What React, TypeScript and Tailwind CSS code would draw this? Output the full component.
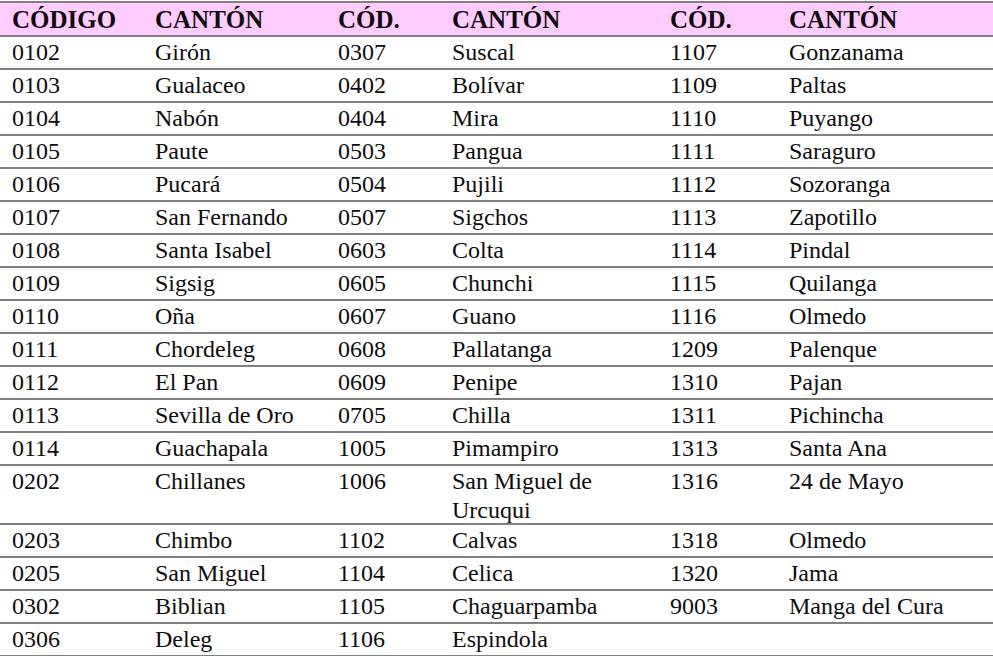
const rows: string[][] = [
  ['0102', 'Girón', '0307', 'Suscal', '1107', 'Gonzanama'],
  ['0103', 'Gualaceo', '0402', 'Bolívar', '1109', 'Paltas'],
  ['0104', 'Nabón', '0404', 'Mira', '1110', 'Puyango'],
  ['0105', 'Paute', '0503', 'Pangua', '1111', 'Saraguro'],
  ['0106', 'Pucará', '0504', 'Pujili', '1112', 'Sozoranga'],
  ['0107', 'San Fernando', '0507', 'Sigchos', '1113', 'Zapotillo'],
  ['0108', 'Santa Isabel', '0603', 'Colta', '1114', 'Pindal'],
  ['0109', 'Sigsig', '0605', 'Chunchi', '1115', 'Quilanga'],
  ['0110', 'Oña', '0607', 'Guano', '1116', 'Olmedo'],
  ['0111', 'Chordeleg', '0608', 'Pallatanga', '1209', 'Palenque'],
  ['0112', 'El Pan', '0609', 'Penipe', '1310', 'Pajan'],
  ['0113', 'Sevilla de Oro', '0705', 'Chilla', '1311', 'Pichincha'],
  ['0114', 'Guachapala', '1005', 'Pimampiro', '1313', 'Santa Ana'],
  ['0202', 'Chillanes', '1006', 'San Miguel de\nUrcuqui', '1316', '24 de Mayo'],
  ['0203', 'Chimbo', '1102', 'Calvas', '1318', 'Olmedo'],
  ['0205', 'San Miguel', '1104', 'Celica', '1320', 'Jama'],
  ['0302', 'Biblian', '1105', 'Chaguarpamba', '9003', 'Manga del Cura'],
  ['0306', 'Deleg', '1106', 'Espindola', '', ''],
]

const headers = ['CÓDIGO', 'CANTÓN', 'CÓD.', 'CANTÓN', 'CÓD.', 'CANTÓN']

// fixed column widths so the text starts where the original table has it
const cols = 'grid grid-cols-[143px_183px_114px_218px_119px_1fr]'

export default function App() {
  return (
    <div className="w-[993px] h-[656px] overflow-hidden bg-white text-[#0d0d0d] font-['Liberation_Serif','DejaVu_Serif',serif]">
      <div className="mt-px border-t-2 border-[#808080]">
        <div className={`${cols} bg-[#ffccff] h-[34px] border-b-2 border-[#808080]`}>
          {headers.map((h, i) => (
            <div key={i} className="pl-3 pt-px text-[25px] font-bold leading-[32px]">
              {h}
            </div>
          ))}
        </div>
        {rows.map((r, ri) => (
          <div
            key={ri}
            className={`${cols} border-b-2 border-[#808080] ${r[3].includes('\n') ? 'h-[59px]' : 'h-[33px]'}`}
          >
            {r.map((c, ci) => (
              <div key={ci} className="pl-3 pt-px text-[24px] leading-[29px] whitespace-pre-line">
                {c}
              </div>
            ))}
          </div>
        ))}
      </div>
    </div>
  )
}
